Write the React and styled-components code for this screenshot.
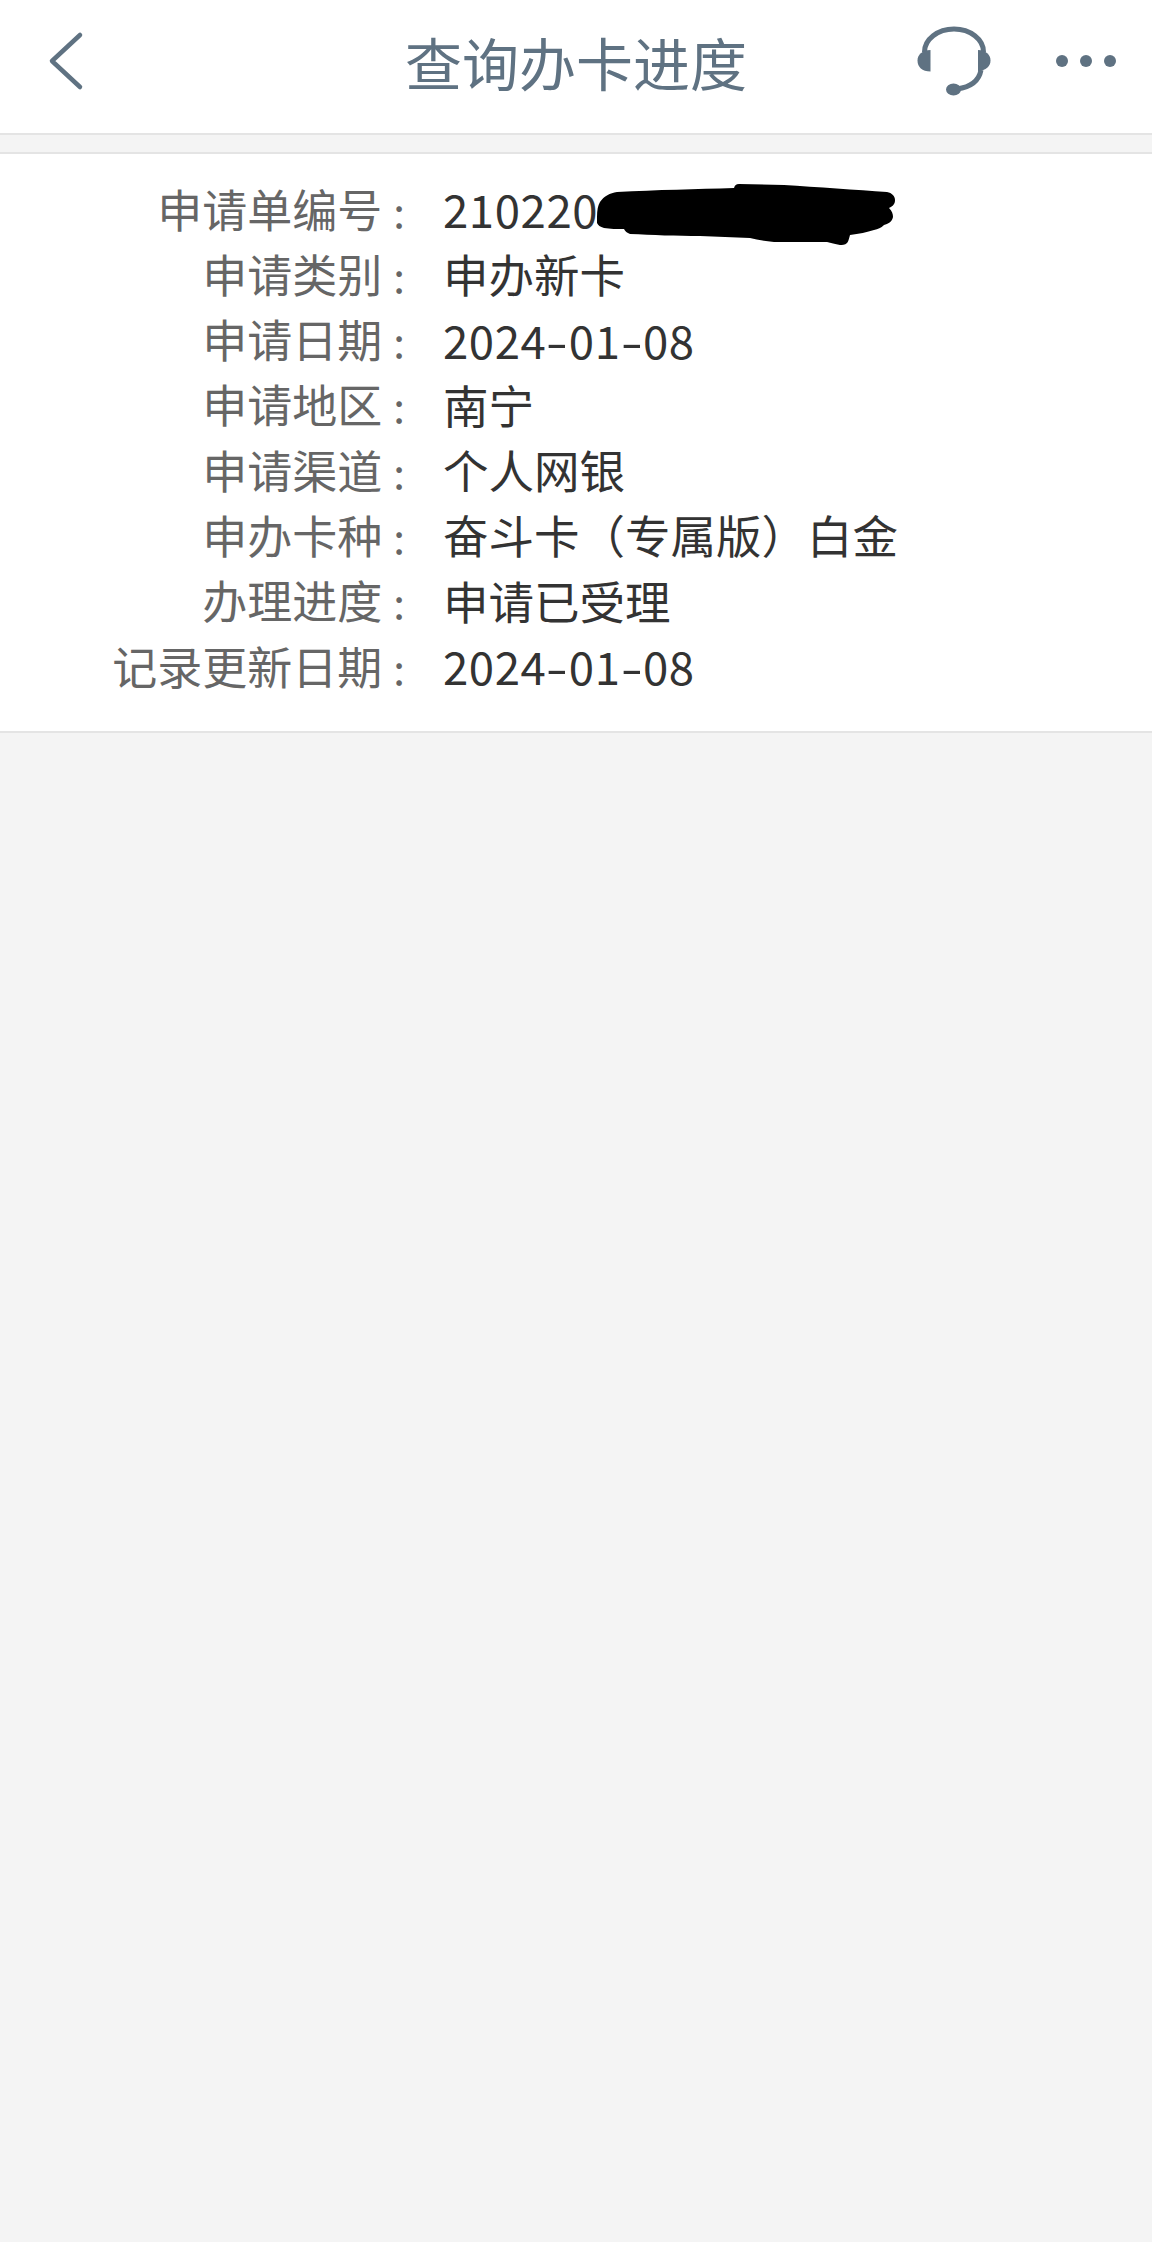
import React from "react";
import styled, {createGlobalStyle} from "styled-components";

const GlobalStyle = createGlobalStyle`
  html, body {
    margin: 0;
    padding: 0;
    background: #f4f4f4;
  }
  body {
    font-family: "Noto Sans CJK SC", "Noto Sans", sans-serif;
  }
`;

const Page = styled.div`
  min-height: 2242px;
  background: #f4f4f4;
  overflow: hidden;
`;

const Header = styled.header`
  height: 133px;
  background: #fff;
  border-bottom: 2px solid #e4e4e4;
  display: grid;
  grid-template-columns: 1fr auto 1fr;
  align-items: center;
`;

const HeaderLeft = styled.div`
  display: flex;
  align-items: center;
  padding: 0 0 12px 48px;
`;

const Title = styled.h1`
  margin: 0;
  padding-bottom: 11px;
  font-size: 57px;
  line-height: 70px;
  font-weight: 400;
  color: #5f7282;
`;

const HeaderRight = styled.div`
  display: flex;
  justify-content: flex-end;
  align-items: center;
  gap: 65px;
  padding: 0 36px 12px 0;
`;

const Card = styled.section`
  margin-top: 17px;
  padding: 21.5px 0 33px;
  background: #fff;
  border-top: 2px solid #e4e4e4;
  border-bottom: 2px solid #e4e4e4;
`;

const Row = styled.div`
  position: relative;
  display: grid;
  grid-template-columns: 405px 1fr;
  height: 65.3px;
  align-items: center;
  font-size: 45px;
  line-height: 65px;
`;

const Label = styled.div`
  text-align: right;
  color: #666;
  white-space: nowrap;
`;

const Colon = styled.span`
  font-size: 42px;
  color: #666;
  margin-left: 11px;
`;

const Value = styled.div`
  color: #333;
  font-size: 45.5px;
  white-space: nowrap;
  padding-left: 38px;
  letter-spacing: ${p => p.$numeric ? "0.6px" : "0"};
`;

const Hyphen = styled.span`
  display: inline-block;
  padding: 0 3px;
  transform: scaleX(1.4);
`;

const Scribble = styled.svg`
  position: absolute;
  left: 597px;
  top: 8px;
  width: 298px;
  height: 61px;
`;

const rows = [
    {label: "申请单编号", value: "210220", numeric: true, hidden: true},
    {label: "申请类别", value: "申办新卡"},
    {label: "申请日期", value: "2024-01-08", numeric: true},
    {label: "申请地区", value: "南宁"},
    {label: "申请渠道", value: "个人网银"},
    {label: "申办卡种", value: "奋斗卡（专属版）白金"},
    {label: "办理进度", value: "申请已受理"},
    {label: "记录更新日期", value: "2024-01-08", numeric: true},
];

function BackIcon() {
    return (
        <svg width="36" height="60" viewBox="0 0 36 60">
            <path d="M32 4 L4 30 L32 56" fill="none" stroke="#5f7282" strokeWidth="4.5" strokeLinecap="round" strokeLinejoin="round"/>
        </svg>
    )
}

function HeadsetIcon() {
    return (
        <svg width="74" height="72" viewBox="0 0 74 72">
            <path d="M7.5 27 A29.5 23 0 0 1 66.5 27" fill="none" stroke="#5f7282" strokeWidth="5"/>
            <path d="M13.5 25 L13.5 46.5 C5 46.5 0.5 42 0.5 35.5 C0.5 29.5 5 25.5 13.5 25 Z" fill="#5f7282"/>
            <path d="M61 25 C69 25.5 73.5 29.5 73.5 35.5 C73.5 41.5 69 45.5 61 46 Z" fill="#5f7282"/>
            <path d="M64 45 C62 56 54 62 40 64" fill="none" stroke="#5f7282" strokeWidth="5"/>
            <ellipse cx="36.5" cy="64.5" rx="7.5" ry="6" fill="#5f7282"/>
        </svg>
    )
}

function MoreIcon() {
    return (
        <svg width="60" height="12" viewBox="0 0 60 12">
            <circle cx="6" cy="6" r="6" fill="#5f7282"/>
            <circle cx="30" cy="6" r="6" fill="#5f7282"/>
            <circle cx="54" cy="6" r="6" fill="#5f7282"/>
        </svg>
    )
}

function InkBlob() {
    return (
        <Scribble viewBox="0 0 298 61">
            <path d="M0 33 C0 26 1 21 3 18 C7 12 13 9 20 8 C60 6 100 5 137 4 C138 1 139 0 142 0 L187 1 C220 3 260 6 290 8 C295 9 298 12 298 16 C298 20 296 22 292 24 C295 27 296 30 296 33 C295 38 291 40 287 41 C284 44 281 45 277 46 C270 48 262 50 253 51 C252 55 251 58 250 59 C248 61 245 61 243 61 C238 60 234 59 230 58 C212 58 195 58 177 58 C168 57 160 56 153 54 C136 53 120 53 103 52 C80 52 55 51 33 50 C30 49 28 47 27 45 C20 45 13 45 7 44 C3 43 1 41 0 39 Z" fill="#000"/>
        </Scribble>
    )
}

// 日期里的连字符比默认字形宽
function renderValue(value, numeric) {
    if (!numeric) return value;
    return value.split("-").map((part, i) => (
        <React.Fragment key={i}>
            {i > 0 && <Hyphen>-</Hyphen>}
            {part}
        </React.Fragment>
    ));
}

export default function App() {
    return (
        <Page>
            <GlobalStyle/>
            <Header>
                <HeaderLeft><BackIcon/></HeaderLeft>
                <Title>查询办卡进度</Title>
                <HeaderRight>
                    <HeadsetIcon/>
                    <MoreIcon/>
                </HeaderRight>
            </Header>
            <Card>
                {rows.map(row => (
                    <Row key={row.label}>
                        <Label>{row.label}<Colon>:</Colon></Label>
                        <Value $numeric={row.numeric}>{renderValue(row.value, row.numeric)}</Value>
                        {row.hidden && <InkBlob/>}
                    </Row>
                ))}
            </Card>
        </Page>
    )
}
